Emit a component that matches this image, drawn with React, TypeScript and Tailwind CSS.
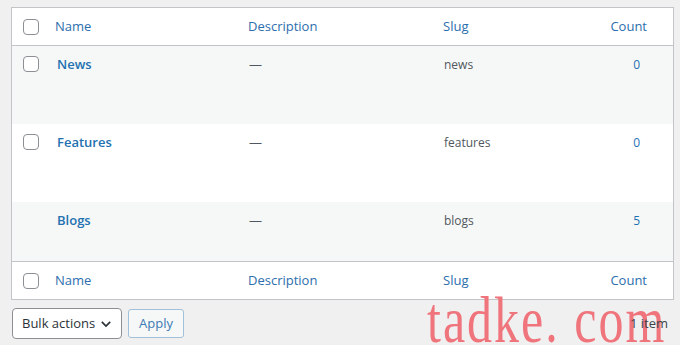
import React from "react";

const rows = [
  { name: "News", slug: "news", count: "0", check: true, bg: "bg-[#f6f7f7]", h: "h-[78px]" },
  { name: "Features", slug: "features", count: "0", check: true, bg: "bg-white", h: "h-[78px]" },
  { name: "Blogs", slug: "blogs", count: "5", check: false, bg: "bg-[#f6f7f7]", h: "h-[59px]" },
];

function Box() {
  return <span className="block w-4 h-4 rounded-[4px] border border-[#8c8f94] bg-white" />;
}

function HeadRow({ top }: { top?: boolean }) {
  return (
    <div className={`flex items-center h-[38px] bg-white ${top ? "border-b" : "border-t"} border-[#c3c4c7] text-[13px] text-[#2c6ead]`}>
      <div className="w-[43px] pl-[11px]"><Box /></div>
      <div className="w-[193px]">Name</div>
      <div className="w-[195px]">Description</div>
      <div className="w-[130px]">Slug</div>
      <div className="flex-1 text-right pr-[26px]">Count</div>
    </div>
  );
}

export default function App() {
  return (
    <div className="relative w-[680px] h-[345px] bg-[#f0f0f1] pt-[7px] pl-[11px] overflow-hidden" style={{ fontFamily: '"Open Sans", "Noto Sans", sans-serif' }}>
      <div className="w-[663px] border border-[#c3c4c7] bg-white">
        <HeadRow top />
        {rows.map((r) => (
          <div key={r.name} className={`flex items-start ${r.h} ${r.bg} text-[13px]`}>
            <div className="w-[43px] pl-[11px] pt-[10px]">{r.check && <Box />}</div>
            <div className="w-[193px] pt-[9px] pl-[2px] font-semibold text-[#2271b1]">{r.name}</div>
            <div className="w-[195px] pt-[9px] pl-[1px] text-[#50575e]">—</div>
            <div className="w-[130px] pt-[10px] pl-[1px] text-[12px] text-[#50575e]">{r.slug}</div>
            <div className="flex-1 pt-[10px] text-right pr-[33px] text-[12px] text-[#2271b1]">{r.count}</div>
          </div>
        ))}
        <HeadRow />
      </div>
      <div className="flex items-center mt-[8px] ml-[1px] gap-[6px]">
        <div className="flex items-center justify-between w-[110px] h-[31px] pl-[9px] pr-[8px] border border-[#8c8f94] rounded-[4px] bg-white text-[13px] text-[#2c3338]">
          <span>Bulk actions</span>
          <svg width="14" height="14" viewBox="0 0 20 20"><path d="M4 7l6 6 6-6" fill="none" stroke="#2c3338" strokeWidth="2.4" /></svg>
        </div>
        <div className="flex items-center justify-center w-[56px] h-[29px] border border-[#a3c0da] rounded-[3px] bg-[#f6f7f7] text-[13px] text-[#3a7ab5]">Apply</div>
        <div className="relative z-10 flex-1 text-right pr-[12px] text-[13px] text-[#3c434a]">1 item</div>
      </div>
      <div className="absolute left-[427px] top-[302px] text-[50px] leading-none tracking-[2px] text-[#ef747c] origin-bottom scale-y-[1.3] pointer-events-none whitespace-nowrap" style={{ fontFamily: '"Liberation Serif", serif' }}>
        tadke. com
      </div>
    </div>
  );
}
